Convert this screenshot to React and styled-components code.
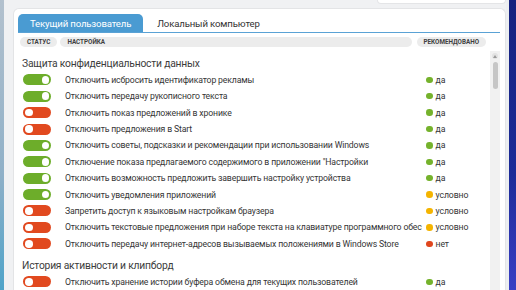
import React from 'react';
import styled, { createGlobalStyle } from 'styled-components';

const Global = createGlobalStyle`
  html, body {
    margin: 0;
    padding: 0;
    width: 516px;
    height: 290px;
    overflow: hidden;
    background: #f0f1f3;
    font-family: Roboto, "Noto Sans", sans-serif;
  }
`;

const Screen = styled.div`
  display: flex;
  width: 516px;
  height: 290px;
  overflow: hidden;
`;

const DesktopLeft = styled.div`
  width: 4px;
  flex-shrink: 0;
  background: linear-gradient(180deg, #b3c1ce 0%, #8fb0c8 60%, #4ea3c9 100%);
`;

const DesktopRight = styled.div`
  width: 7px;
  flex-shrink: 0;
  border-left: 3px solid #eceef0;
  background: linear-gradient(180deg, #16227e 0%, #1c2b98 60%, #3a3fc4 100%);
`;

const Window = styled.div`
  flex: 1;
  display: flex;
  flex-direction: column;
  background: #f0f1f3;
  padding-left: 9px;
  min-width: 0;
`;

const TopStrip = styled.div`
  height: 8px;
  flex-shrink: 0;
  display: flex;
  justify-content: flex-end;
`;

const TopPanel = styled.div`
  width: 127px;
  height: 3px;
  background: #ffffff;
  border: 1px solid #e4e5e7;
  border-top: none;
  border-radius: 0 0 4px 4px;
`;

const Card = styled.div`
  flex: 1;
  background: #ffffff;
  border: 1px solid #e3e4e6;
  border-bottom: none;
  border-radius: 6px 6px 0 0;
  padding-top: 5px;
  display: flex;
  flex-direction: column;
  min-height: 0;
`;

const TabBar = styled.div`
  display: flex;
  align-items: flex-end;
  margin: 0 5px 0 4px;
  border-bottom: 1.5px solid #5aa2d5;
`;

const Tab = styled.div`
  height: 18px;
  display: flex;
  align-items: center;
  padding: 0 ${p => (p.$active ? '12px' : '14px')};
  font-size: 9.6px;
  letter-spacing: -0.15px;
  border-radius: 5px 5px 0 0;
  color: ${p => (p.$active ? '#ffffff' : '#333333')};
  background: ${p => (p.$active ? '#4a9bd2' : 'transparent')};
`;

const HeaderRow = styled.div`
  display: flex;
  gap: 3px;
  margin-top: 4px;
  padding: 0 19px 0 6px;
`;

const HeadChip = styled.div`
  height: 10px;
  display: flex;
  align-items: center;
  padding: 0 7px;
  border-radius: 5px;
  background: #ececec;
  color: #3f3f3f;
  font-size: 6.3px;
  font-weight: 700;
  flex: ${p => (p.$grow ? 1 : 'none')};
  margin-left: ${p => (p.$gap ? '2px' : '0')};
`;

const Body = styled.div`
  flex: 1;
  display: flex;
  min-height: 0;
  margin-top: 4px;
  padding-right: 5px;
`;

const List = styled.div`
  flex: 1;
  min-width: 0;
  padding-left: 8px;
  display: flex;
  flex-direction: column;
`;

const SectionTitle = styled.div`
  height: 17px;
  display: flex;
  align-items: center;
  margin-top: ${p => (p.$first ? '5px' : '6px')};
  font-size: 10.3px;
  letter-spacing: -0.2px;
  color: #3c3c3c;
`;

const Row = styled.div`
  height: 16.4px;
  display: grid;
  grid-template-columns: 43px 1fr 68px;
  align-items: center;
  flex-shrink: 0;
`;

const Toggle = styled.div`
  width: 28px;
  height: 11px;
  margin-left: 1px;
  box-sizing: border-box;
  padding: 0 2px;
  border-radius: 6px;
  display: flex;
  align-items: center;
  justify-content: ${p => (p.$on ? 'flex-end' : 'flex-start')};
  background: ${p => (p.$on ? '#6dad2a' : '#e1491f')};
`;

const Knob = styled.div`
  width: 7.5px;
  height: 7.5px;
  border-radius: 50%;
  background: #ffffff;
`;

const Label = styled.div`
  font-size: 8.7px;
  letter-spacing: -0.15px;
  color: #353535;
  white-space: nowrap;
  overflow: hidden;
  padding-right: 2px;
`;

const Status = styled.div`
  display: flex;
  align-items: center;
  gap: 3px;
  padding-left: 4px;
  font-size: 8.7px;
  letter-spacing: -0.1px;
  color: #353535;
`;

const Dot = styled.span`
  width: 6.5px;
  height: 6.5px;
  border-radius: 50%;
  background: ${p => p.$color};
`;

const Scrollbar = styled.div`
  width: 10px;
  flex-shrink: 0;
  background: #f1f1f1;
  display: flex;
  flex-direction: column;
  align-items: center;
  padding-top: 2px;
`;

const Arrow = styled.div`
  width: 6px;
  height: 6px;
  border-radius: 50%;
  background: #e2e2e2;
  display: flex;
  align-items: center;
  justify-content: center;
`;

const Thumb = styled.div`
  width: 5px;
  height: 27px;
  margin-top: 3px;
  border-radius: 3px;
  background: #c6c6c6;
`;

const statusColors = {
  'да': '#75b22c',
  'условно': '#f4b400',
  'нет': '#e0461d',
};

const sections = [
  {
    title: 'Защита конфиденциальности данных',
    rows: [
      [true, 'Отключить исбросить идентификатор рекламы', 'да'],
      [true, 'Отключить передачу рукописного текста', 'да'],
      [false, 'Отключить показ предложений в хронике', 'да'],
      [false, 'Отключить предложения в Start', 'да'],
      [true, 'Отключить советы, подсказки и рекомендации при использовании Windows', 'да'],
      [true, 'Отключение показа предлагаемого содержимого в приложении "Настройки', 'да'],
      [true, 'Отключить возможность предложить завершить настройку устройства', 'да'],
      [true, 'Отключить уведомления приложений', 'условно'],
      [false, 'Запретить доступ к языковым настройкам браузера', 'условно'],
      [false, 'Отключить текстовые предложения при наборе текста на клавиатуре программного обеспечения', 'условно'],
      [false, 'Отключить передачу интернет-адресов вызываемых положениями в Windows Store', 'нет'],
    ],
  },
  {
    title: 'История активности и клипборд',
    rows: [
      [false, 'Отключить хранение истории буфера обмена для текущих пользователей', 'да'],
    ],
  },
];

export default function App() {
  return (
    <Screen>
      <Global />
      <DesktopLeft />
      <Window>
        <TopStrip>
          <TopPanel />
        </TopStrip>
        <Card>
          <TabBar>
            <Tab $active>Текущий пользователь</Tab>
            <Tab>Локальный компьютер</Tab>
          </TabBar>
          <HeaderRow>
            <HeadChip>СТАТУС</HeadChip>
            <HeadChip $grow>НАСТРОЙКА</HeadChip>
            <HeadChip $gap>РЕКОМЕНДОВАНО</HeadChip>
          </HeaderRow>
          <Body>
            <List>
              {sections.map((s, si) => (
                <React.Fragment key={s.title}>
                  <SectionTitle $first={si === 0}>{s.title}</SectionTitle>
                  {s.rows.map(([on, text, rec]) => (
                    <Row key={text}>
                      <Toggle $on={on}>
                        <Knob />
                      </Toggle>
                      <Label>{text}</Label>
                      <Status>
                        <Dot $color={statusColors[rec]} />
                        {rec}
                      </Status>
                    </Row>
                  ))}
                </React.Fragment>
              ))}
            </List>
            <Scrollbar>
              <Arrow>
                <svg width="4" height="3" viewBox="0 0 4 3">
                  <path d="M0 3 L2 0 L4 3 Z" fill="#9a9a9a" />
                </svg>
              </Arrow>
              <Thumb />
            </Scrollbar>
          </Body>
        </Card>
      </Window>
      <DesktopRight />
    </Screen>
  );
}
